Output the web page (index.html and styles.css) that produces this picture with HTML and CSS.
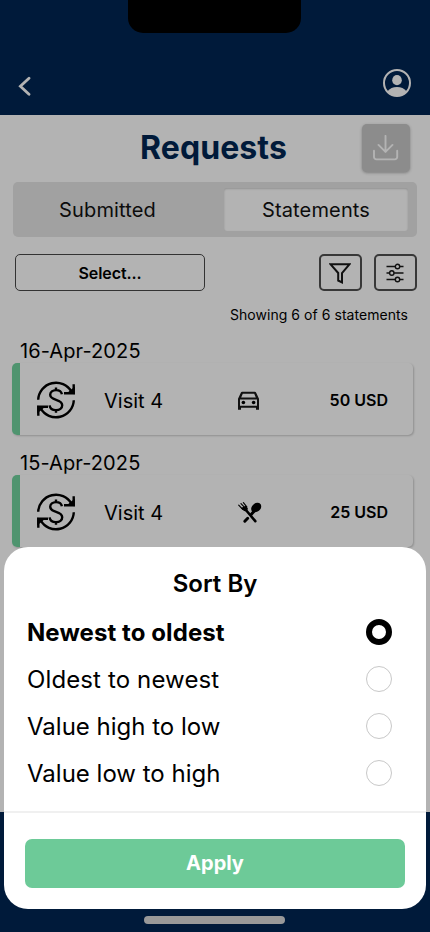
FILE: index.html
```html
<!DOCTYPE html>
<html lang="en">
<head>
<meta charset="utf-8">
<title>Requests</title>
<link rel="stylesheet" href="styles.css">
</head>
<body>
<svg class="defs" width="0" height="0" aria-hidden="true">
  <symbol id="refund" viewBox="0 0 38 38">
    <g fill="none" stroke="currentColor" stroke-width="2.4">
      <path d="M1.2 18.8A17.8 17.8 0 0 1 34.5 10.8"/>
      <path d="M36.7 3.3v9H27"/>
      <path d="M36.8 19.2A17.8 17.8 0 0 1 3.5 27.2"/>
      <path d="M1.3 34.7v-9H11"/>
      <path d="M24.9 13.3c-.5-2.7-2.7-4.2-5.8-4.2-3.5 0-5.9 1.9-5.9 4.7 0 6.5 12 3.7 12 10.4 0 3-2.6 4.9-6.2 4.9-3.5 0-6-1.8-6.4-4.8M19 6.5v3M19 28.7v3"/>
    </g>
    <path d="M37.8 13.2V5.5l-8 6.8zM.2 24.8v7.7l8-6.8z"/>
  </symbol>
</svg>
<div class="phone">
  <header class="header">
    <div class="notch"></div>
    <svg class="back" width="13" height="20" viewBox="0 0 13 20"><path d="M11 2.2L2.4 10.3l8.6 7.9" fill="none" stroke="currentColor" stroke-width="2.8" stroke-linecap="round"/></svg>
    <svg width="28" height="28" viewBox="0 0 28 28"><circle cx="14" cy="14" r="13" fill="none" stroke="currentColor" stroke-width="2"/><ellipse cx="14" cy="11.2" rx="4.8" ry="5.1" fill="currentColor"/><path d="M4.3 22.4C6.8 19.5 10 18 14 18s7.2 1.5 9.7 4.4A13 13 0 0 1 14 27a13 13 0 0 1-9.7-4.6Z" fill="currentColor"/></svg>
  </header>

  <main class="content">
    <div class="title-row">
      <h1 class="title">Requests</h1>
      <button class="download" aria-label="Download"><svg width="26" height="26" viewBox="0 0 26 26" fill="none" stroke="currentColor" stroke-width="1.9" stroke-linecap="round" stroke-linejoin="round"><path d="M12.5.9v16M5.5 9.9l7 7 7-7M1 15.8V22a2.4 2.4 0 0 0 2.4 2.4h18.4a2.4 2.4 0 0 0 2.4-2.4v-6.2"/></svg></button>
    </div>
    <div class="tabs">
      <div class="tab">Submitted</div>
      <div class="tab active">Statements</div>
    </div>
    <div class="tools">
      <button class="select">Select...</button>
      <button class="tool" aria-label="Filter"><svg class="funnel" width="22" height="21" viewBox="0 0 22 21"><path d="M1.6 1.3h18.8L13 10v9.3l-3.8-1.8V10Z" fill="none" stroke="currentColor" stroke-width="2"/></svg></button>
      <button class="tool" aria-label="Sort"><svg class="sliders" width="18" height="20" viewBox="0 0 18 20" fill="none" stroke="currentColor" stroke-width="1.4"><path d="M.5 3.5h8.8m4.4 0h3.8M.5 10h3m4.6 0h9.4M.5 16.5h8.8m4.4 0h3.8"/><circle cx="11.5" cy="3.5" r="2.2"/><circle cx="5.8" cy="10" r="2.2"/><circle cx="11.5" cy="16.5" r="2.2"/></svg></button>
    </div>
    <p class="count">Showing 6 of 6 statements</p>

    <section class="entry">
      <h2 class="date">16-Apr-2025</h2>
      <div class="card">
        <svg class="refund" width="38" height="38"><use href="#refund"/></svg>
        <span class="visit">Visit 4</span>
        <svg class="kind" width="22" height="20" viewBox="0 0 22 20"><path fill="currentColor" fill-rule="evenodd" d="M2.8 1.8Q3.2.8 4.2.8h12.6q1 0 1.4 1L21 7.8v11h-3v-2H3v2H0v-11ZM4.8 2.8 3.2 6.4h14.6L16.2 2.8ZM2 8.5v6.2h17V8.5Z"/><circle cx="5.4" cy="11.5" r="1.8"/><circle cx="15.6" cy="11.5" r="1.8"/></svg>
        <strong class="amount">50 USD</strong>
      </div>
    </section>
    <section class="entry">
      <h2 class="date">15-Apr-2025</h2>
      <div class="card">
        <svg class="refund" width="38" height="38"><use href="#refund"/></svg>
        <span class="visit">Visit 4</span>
        <svg class="kind meal" width="24" height="22" viewBox="0 0 24 22"><g fill="none" stroke="currentColor" stroke-linecap="round"><path d="M6.8 19.2l2.9-2.9M13.4 12.2l2.4-2.6" stroke-width="3"/><path d="M7.5 7.5l9.8 11.7" stroke-width="2.6"/><path d="M.7 3.1l4 4.3M3 1.7l4 4.2M5.4.7l3.4 4.2" stroke-width="1.2"/></g><path d="M2.9 6.1 7.9 3.8 9.9 6.4 8.9 9.5 6 9.1Z"/><ellipse cx="18.2" cy="5.6" rx="5.5" ry="4.2" transform="rotate(-40 18.2 5.6)"/></svg>
        <strong class="amount">25 USD</strong>
      </div>
    </section>
  </main>

  <footer class="footer"><div class="home-bar"></div></footer>

  <div class="sheet" role="dialog" aria-label="Sort By">
    <h2 class="sheet-title">Sort By</h2>
    <div class="options">
      <div class="option chosen"><span class="label">Newest to oldest</span><i class="radio"></i></div>
      <div class="option"><span class="label wide">Oldest to newest</span><i class="radio"></i></div>
      <div class="option"><span class="label">Value high to low</span><i class="radio"></i></div>
      <div class="option"><span class="label">Value low to high</span><i class="radio"></i></div>
    </div>
    <div class="sheet-footer"><button class="apply">Apply</button></div>
  </div>
</div>
</body>
</html>
```
FILE: styles.css
```css
* { box-sizing: border-box; }
body { margin: 0; font-family: Inter, sans-serif; color: #000; }
h1, h2, p { margin: 0; font-weight: 400; }
button { font: inherit; color: inherit; padding: 0; background: none; border: 0; }
svg { display: block; flex: none; }
.defs { position: absolute; }
.phone { position: relative; width: 430px; height: 932px; overflow: hidden; display: flex; flex-direction: column; background: #b3b3b3; }

.header { position: relative; flex: none; height: 115px; padding: 0 19px 18px 17px; display: flex; align-items: flex-end; justify-content: space-between; background: #001a3a; color: #b3b3b3; }
.notch { position: absolute; top: 0; left: 128px; width: 173px; height: 33px; border-radius: 0 0 15px 15px; background: #000; }
.back { margin: 0 0 1px 1px; }

.content { flex: none; height: 697px; }
.title-row { display: grid; grid-template-columns: 1fr 48px; height: 67px; padding: 9px 20px 0 65px; align-items: start; }
.title { font-size: 32px; font-weight: 700; line-height: 48px; letter-spacing: .1px; text-align: center; color: #001a3a; }
.download { height: 48px; display: flex; align-items: center; justify-content: center; border-radius: 5px; background: #8c8c8c; color: #b3b3b3; box-shadow: 0 1px 3px rgba(0, 0, 0, .3); }
.tabs { display: flex; height: 55px; margin: 0 13px; padding: 6px 9px 6px 5px; border-radius: 5px; background: #a1a1a1; }
.tab { width: 179px; margin-right: 27px; display: flex; align-items: center; justify-content: center; font-size: 20px; letter-spacing: .15px; color: #0c0c0c; }
.tab.active { flex: 1; margin: 0; border-radius: 3px; background: #b3b3b3; box-shadow: inset 0 1px 2px rgba(0, 0, 0, .18); }
.tools { display: flex; gap: 12px; margin: 17px 13px 0 15px; height: 37px; }
.select { width: 190px; margin-right: auto; border: 1px solid #333; border-radius: 5px; font-size: 16px; font-weight: 600; letter-spacing: -.1px; }
.tool { width: 43px; border: 2px solid #383838; border-radius: 5px; display: flex; align-items: center; justify-content: center; color: #111; }
.funnel { margin: 2px 1px 0 0; }
.sliders { margin-right: 1px; }
.count { margin: 14px 22px 0 0; font-size: 14px; letter-spacing: .05px; line-height: 20px; text-align: right; }
.entry { height: 112px; padding: 0 17px 0 12px; }
.count + .entry { margin-top: 14px; }
.date { padding-left: 8px; font-size: 20px; line-height: 24px; letter-spacing: .1px; }
.card { height: 72px; border-left: 8px solid #4f946f; border-radius: 5px; padding: 2px 25px 0 17px; display: flex; align-items: center; box-shadow: 1px 1px 2px rgba(0, 0, 0, .2); }
.visit { width: 134px; margin: 1px 0 0 29px; font-size: 20px; }
.kind { margin-top: 1px; color: #111; }
.kind.meal { color: #000; }
.amount { margin-left: auto; font-size: 16px; font-weight: 600; }

.footer { flex: 1; display: flex; justify-content: center; align-items: flex-end; padding: 0 1px 8px 0; background: #001a3a; }
.home-bar { width: 141px; height: 8px; border-radius: 4px; background: #999; }

.sheet { position: absolute; left: 4px; right: 4px; top: 547px; height: 362px; display: flex; flex-direction: column; border-radius: 24px; background: #fff; }
.sheet-title { padding-top: 20px; font-size: 24px; line-height: 33px; font-weight: 600; text-align: center; }
.options { padding: 8px 34px 15px 23px; }
.option { height: 47px; display: flex; align-items: center; justify-content: space-between; font-size: 24px; }
.label { padding-top: 2px; }
.chosen { font-weight: 700; letter-spacing: .08px; }
.wide { letter-spacing: .12px; }
.radio { width: 26px; height: 26px; border: 1px solid #c8c8c8; border-radius: 50%; }
.chosen .radio { border: 6px solid #000; }
.sheet-footer { flex: 1; border-top: 2px solid #f0f0f0; padding: 26px 21px 21px; }
.apply { width: 100%; height: 49px; border-radius: 7px; background: #6dca98; color: #fff; font-size: 20px; font-weight: 700; line-height: 47px; }
```
